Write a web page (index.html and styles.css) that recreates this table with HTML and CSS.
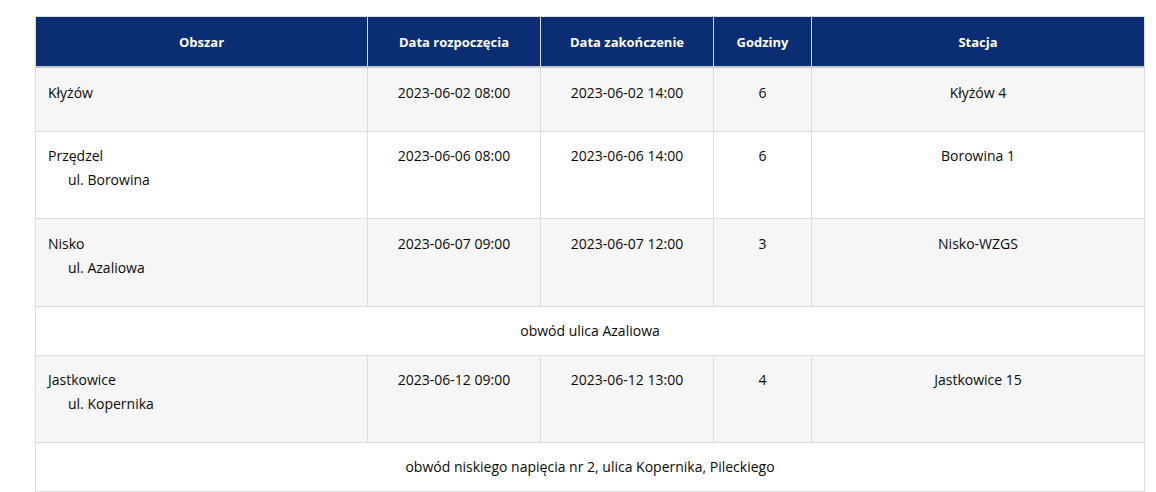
FILE: index.html
```html
<!DOCTYPE html>
<html lang="pl">
<head>
<meta charset="utf-8">
<title>Wyłączenia</title>
<link rel="stylesheet" href="styles.css">
</head>
<body>
<div class="wrap">
<table class="outages">
  <colgroup>
    <col class="c-area">
    <col class="c-date">
    <col class="c-date">
    <col class="c-hours">
    <col class="c-station">
  </colgroup>
  <thead>
    <tr>
      <th>Obszar</th>
      <th>Data rozpoczęcia</th>
      <th>Data zakończenie</th>
      <th>Godziny</th>
      <th>Stacja</th>
    </tr>
  </thead>
  <tbody>
    <tr class="alt">
      <td class="area">Kłyżów</td>
      <td>2023-06-02 08:00</td>
      <td>2023-06-02 14:00</td>
      <td>6</td>
      <td>Kłyżów 4</td>
    </tr>
    <tr>
      <td class="area">Przędzel<span class="street">ul. Borowina</span></td>
      <td>2023-06-06 08:00</td>
      <td>2023-06-06 14:00</td>
      <td>6</td>
      <td>Borowina 1</td>
    </tr>
    <tr class="alt">
      <td class="area">Nisko<span class="street">ul. Azaliowa</span></td>
      <td>2023-06-07 09:00</td>
      <td>2023-06-07 12:00</td>
      <td>3</td>
      <td>Nisko-WZGS</td>
    </tr>
    <tr class="detail">
      <td colspan="5">obwód ulica Azaliowa</td>
    </tr>
    <tr class="alt">
      <td class="area">Jastkowice<span class="street">ul. Kopernika</span></td>
      <td>2023-06-12 09:00</td>
      <td>2023-06-12 13:00</td>
      <td>4</td>
      <td>Jastkowice 15</td>
    </tr>
    <tr class="detail">
      <td colspan="5">obwód niskiego napięcia nr 2, ulica Kopernika, Pileckiego</td>
    </tr>
  </tbody>
</table>
</div>
</body>
</html>
```

FILE: styles.css
```css
html, body {
  margin: 0;
  padding: 0;
  background: #fff;
}

.wrap {
  padding: 16px 11px 0 35px;
}

.outages {
  width: 1110px;
  border-collapse: collapse;
  table-layout: fixed;
  font-family: "Open Sans", "Noto Sans", sans-serif;
  font-size: 14px;
  color: #0a0a0a;
  border: 1px solid #dcdcdc;
}

.c-area { width: 332px; }
.c-date { width: 173px; }
.c-hours { width: 98px; }

.outages th {
  background: #0a2d74;
  color: #fff;
  font-size: 13px;
  font-weight: 700;
  height: 49px;
  padding: 0 8px;
  text-align: center;
  vertical-align: middle;
  border-left: 1px solid #dcdcdc;
  border-top: 1px solid #dcdcdc;
  border-bottom: 2px solid #c8c8c8;
  line-height: 18px;
}

.outages td {
  border: 1px solid #dcdcdc;
  padding: 12.5px 12px 26px;
  line-height: 24px;
  vertical-align: top;
  text-align: center;
}

.outages td.area {
  text-align: left;
}

.street {
  display: block;
  padding-left: 20px;
}

.outages tr.alt td {
  background: #f6f6f6;
}

.outages tr.detail td {
  padding: 12px 12px;
  background: #fff;
}
```
